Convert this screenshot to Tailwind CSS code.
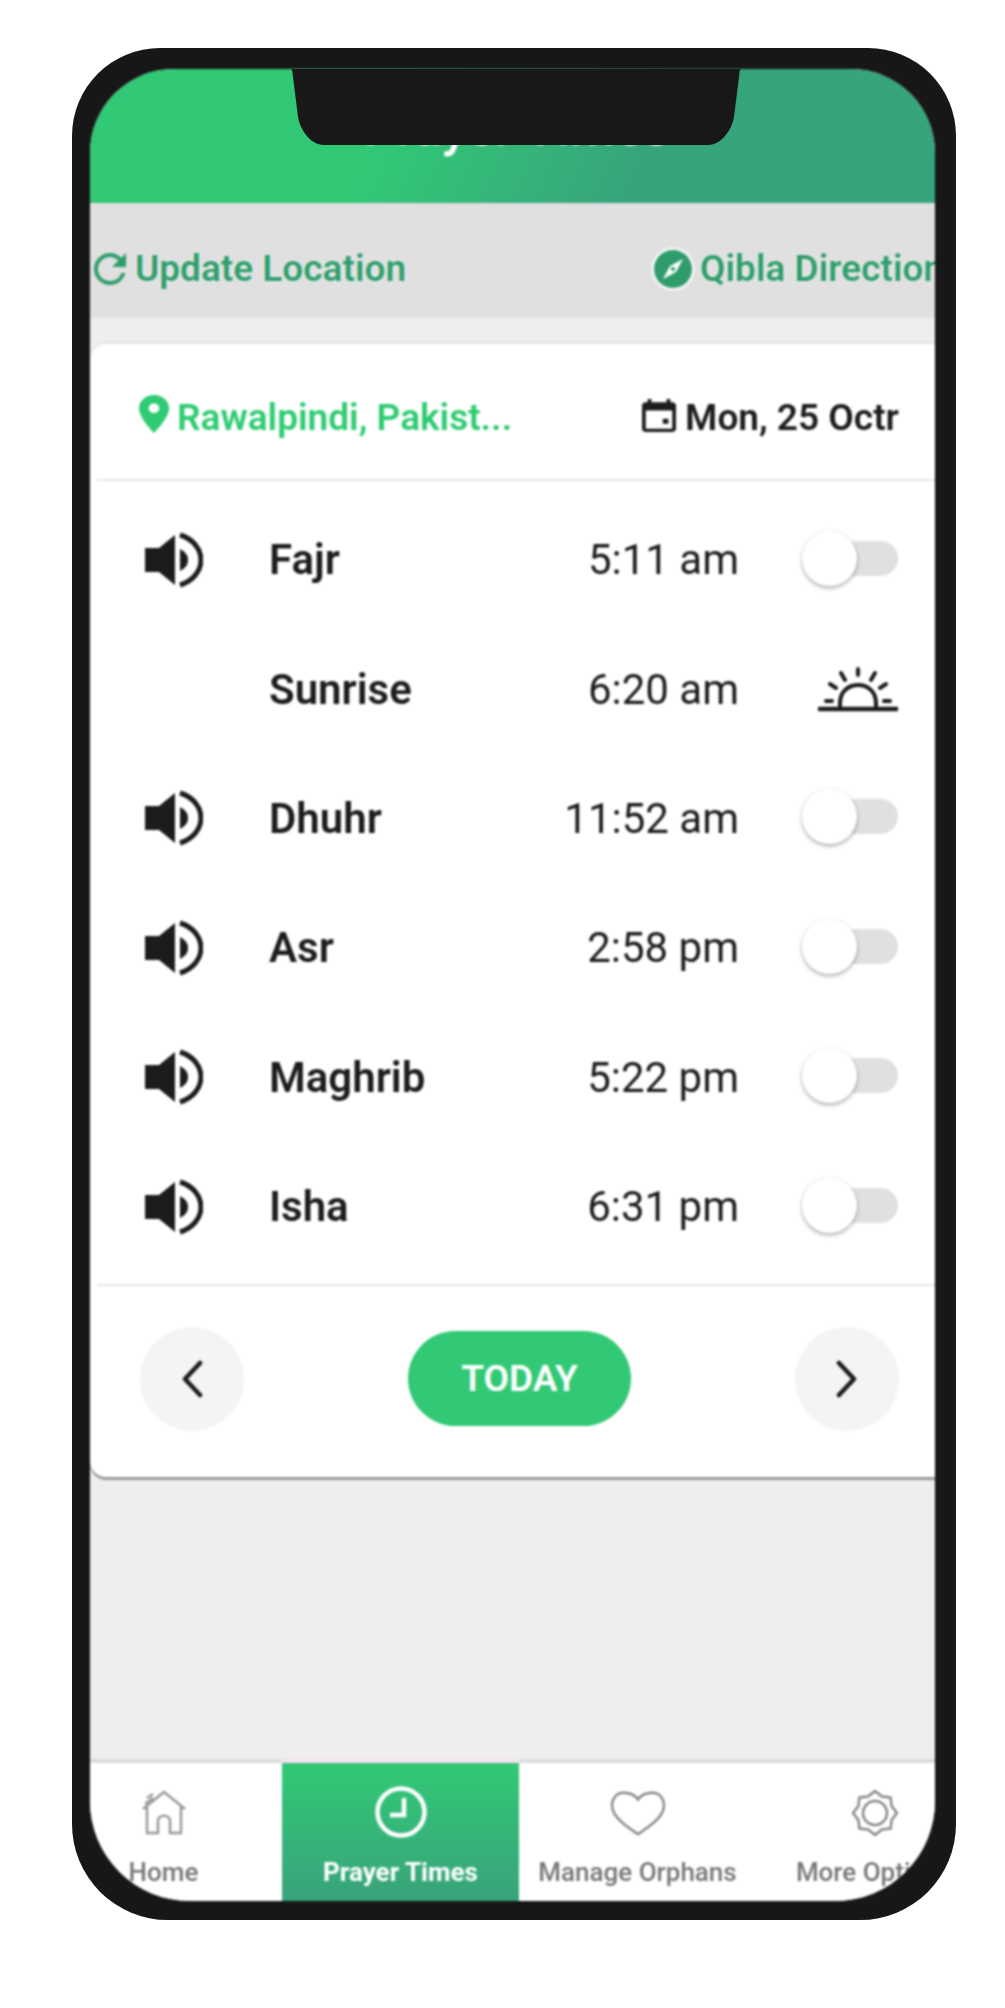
<!DOCTYPE html>
<html lang="en">
<head>
<meta charset="UTF-8">
<title>Prayer Times</title>
<script src="https://cdn.jsdelivr.net/npm/@tailwindcss/browser@4"></script>
</head>
<body class="bg-white font-['Roboto',sans-serif]">
<div class="w-[1005px] h-[2008px] pl-[72px] pt-[48px] overflow-hidden">
  <!-- phone body -->
  <div class="relative w-[884px] h-[1872px] bg-[#171717] rounded-t-[88px] rounded-b-[96px] pl-[18px] pr-[21px] pt-[21px] pb-[19px]">
    <!-- notch -->
    <svg class="absolute left-[218px] top-[21px] z-10" width="452" height="76" viewBox="0 0 452 76"><path d="M0 0H452C449 0 450 2 449 8L444 48C442 60 432 76 418 76H34C20 76 10 60 8 48L3 8C2 2 3 0 0 0Z" fill="#181818"/></svg>

    <div class="w-full h-full rounded-t-[84px] rounded-b-[100px] overflow-hidden bg-[#eeeeee] flex flex-col blur-[0.8px]">
      <!-- header -->
      <div class="h-[136px] shrink-0 border-b-2 border-[#e6dce2] bg-[linear-gradient(115deg,#32c976_35%,#37a57b_65%)]">
        <div class="text-center text-white text-[52px] font-medium leading-[54px] pt-[32px] pl-[8px]">Prayer Times</div>
      </div>

      <!-- location actions -->
      <div class="h-[113px] shrink-0 bg-[#e0e0e0] flex items-center pl-[4px] pt-[14px] text-[#2f9d6b] text-[37px] font-semibold whitespace-nowrap [text-shadow:0_0_3px_#fff]">
        <svg class="w-[32px] h-[32px] mr-[9px] shrink-0" viewBox="4 4 16 16" fill="#2f9d6b"><path d="M17.65 6.35A7.958 7.958 0 0 0 12 4c-4.42 0-7.99 3.58-7.99 8s3.57 8 7.99 8c3.73 0 6.84-2.55 7.73-6h-2.08A5.99 5.99 0 0 1 12 18c-3.31 0-6-2.69-6-6s2.69-6 6-6c1.66 0 3.14.69 4.22 1.78L13 11h7V4l-2.35 2.35z"/></svg>
        <span class="w-[516px] shrink-0">Update Location</span>
        <svg class="w-[44px] h-[44px] mr-[5px] shrink-0" viewBox="0 0 44 44"><circle cx="22" cy="22" r="21.5" fill="#fff" fill-opacity=".8"/><circle cx="22" cy="22" r="19" fill="#2f9d6b"/><path d="M32 12L25 25L19 19Z" fill="#fff"/><path d="M12 32L19 19L25 25Z" fill="#fff"/><circle cx="22" cy="22" r="2" fill="#2f9d6b"/></svg>
        <span class="shrink-0">Qibla Direction</span>
      </div>

      <!-- main -->
      <div class="flex-1 pt-[26px]">
        <div class="w-[880px] h-[1133px] bg-white rounded-l-[16px] shadow-[0_3px_1px_#9a9a9a,0_-2px_2px_#e4e4e4] flex flex-col">
          <!-- card head -->
          <div class="h-[137px] shrink-0 ml-[7px] border-b-2 border-[#e6e6e6] flex items-center pl-[42px] pt-[12px] text-[37px] font-semibold whitespace-nowrap">
            <svg class="w-[30px] h-[38px] mr-[8px] -mt-[8px] shrink-0" viewBox="5 2 14 20" preserveAspectRatio="none" fill="#2fcb72"><path d="M12 2C8.13 2 5 5.13 5 9c0 5.25 7 13 7 13s7-7.75 7-13c0-3.87-3.13-7-7-7zm0 9.5c-1.38 0-2.5-1.12-2.5-2.5s1.12-2.5 2.5-2.5 2.5 1.12 2.5 2.5-1.12 2.5-2.5 2.5z"/></svg>
            <span class="w-[465px] shrink-0 text-[#2fcb72]">Rawalpindi, Pakist...</span>
            <svg class="w-[34px] h-[33px] mr-[9px] -mt-[4px] shrink-0" viewBox="3 1 18 20" preserveAspectRatio="none" fill="#1c1c1c"><path d="M17 13h-3v3h3zM16 1v2H8V1H6v2H5c-1.11 0-1.99.9-1.99 2L3 19c0 1.1.89 2 2 2h14c1.1 0 2-.9 2-2V5c0-1.1-.9-2-2-2h-1V1h-2zm3 18H5V8h14v11z"/></svg>
            <span class="text-[#1c1c1c]">Mon, 25 Octr</span>
          </div>

          <!-- prayer rows -->
          <div class="pt-[14px] pl-[55px] pr-[72px] text-[#1c1c1c] text-[42px]">
            <div class="h-[129.4px] flex items-center">
              <svg class="w-[58px] h-[56px] mr-[66px] shrink-0" viewBox="0 0 58 56"><path d="M0 16H14L30 3V53L14 40H0Z" fill="#1c1c1c"/><path d="M35 17C41 20 43 24 43 28C43 32 41 36 35 39Z" fill="#1c1c1c"/><path d="M35 3C48 7 56 17 56 28C56 39 48 49 35 53" fill="none" stroke="#1c1c1c" stroke-width="5"/></svg>
              <span class="flex-1 font-semibold">Fajr</span>
              <span>5:11 am</span>
              <div class="relative w-[159px] h-[56px] shrink-0 -mt-[2px]">
                <div class="absolute right-0 top-[10px] w-[70px] h-[35px] rounded-full bg-[#e0e0e0]"></div>
                <div class="absolute left-[63px] top-0 w-[55px] h-[55px] rounded-full bg-white shadow-[0_2px_4px_#00000055]"></div>
              </div>
            </div>
            <div class="h-[129.4px] flex items-center">
              <div class="w-[58px] h-[56px] mr-[66px] shrink-0"></div>
              <span class="flex-1 font-semibold">Sunrise</span>
              <span>6:20 am</span>
              <div class="w-[159px] h-[56px] shrink-0 flex justify-end items-center">
                <svg class="w-[80px] h-[45px]" viewBox="0 0 80 45" fill="none" stroke="#1c1c1c" stroke-width="4" stroke-linecap="round"><path d="M1 42H79" stroke-width="4.5"/><path d="M22 41V36C22 25 30 18 40 18C50 18 58 25 58 36V41"/><path d="M40 2V8M23 6L27 13M57 6L53 13M12 17L18 21M68 17L62 21M8 34H14M66 34H72"/></svg>
              </div>
            </div>
            <div class="h-[129.4px] flex items-center">
              <svg class="w-[58px] h-[56px] mr-[66px] shrink-0" viewBox="0 0 58 56"><path d="M0 16H14L30 3V53L14 40H0Z" fill="#1c1c1c"/><path d="M35 17C41 20 43 24 43 28C43 32 41 36 35 39Z" fill="#1c1c1c"/><path d="M35 3C48 7 56 17 56 28C56 39 48 49 35 53" fill="none" stroke="#1c1c1c" stroke-width="5"/></svg>
              <span class="flex-1 font-semibold">Dhuhr</span>
              <span>11:52 am</span>
              <div class="relative w-[159px] h-[56px] shrink-0 -mt-[2px]">
                <div class="absolute right-0 top-[10px] w-[70px] h-[35px] rounded-full bg-[#e0e0e0]"></div>
                <div class="absolute left-[63px] top-0 w-[55px] h-[55px] rounded-full bg-white shadow-[0_2px_4px_#00000055]"></div>
              </div>
            </div>
            <div class="h-[129.4px] flex items-center">
              <svg class="w-[58px] h-[56px] mr-[66px] shrink-0" viewBox="0 0 58 56"><path d="M0 16H14L30 3V53L14 40H0Z" fill="#1c1c1c"/><path d="M35 17C41 20 43 24 43 28C43 32 41 36 35 39Z" fill="#1c1c1c"/><path d="M35 3C48 7 56 17 56 28C56 39 48 49 35 53" fill="none" stroke="#1c1c1c" stroke-width="5"/></svg>
              <span class="flex-1 font-semibold">Asr</span>
              <span>2:58 pm</span>
              <div class="relative w-[159px] h-[56px] shrink-0 -mt-[2px]">
                <div class="absolute right-0 top-[10px] w-[70px] h-[35px] rounded-full bg-[#e0e0e0]"></div>
                <div class="absolute left-[63px] top-0 w-[55px] h-[55px] rounded-full bg-white shadow-[0_2px_4px_#00000055]"></div>
              </div>
            </div>
            <div class="h-[129.4px] flex items-center">
              <svg class="w-[58px] h-[56px] mr-[66px] shrink-0" viewBox="0 0 58 56"><path d="M0 16H14L30 3V53L14 40H0Z" fill="#1c1c1c"/><path d="M35 17C41 20 43 24 43 28C43 32 41 36 35 39Z" fill="#1c1c1c"/><path d="M35 3C48 7 56 17 56 28C56 39 48 49 35 53" fill="none" stroke="#1c1c1c" stroke-width="5"/></svg>
              <span class="flex-1 font-semibold">Maghrib</span>
              <span>5:22 pm</span>
              <div class="relative w-[159px] h-[56px] shrink-0 -mt-[2px]">
                <div class="absolute right-0 top-[10px] w-[70px] h-[35px] rounded-full bg-[#e0e0e0]"></div>
                <div class="absolute left-[63px] top-0 w-[55px] h-[55px] rounded-full bg-white shadow-[0_2px_4px_#00000055]"></div>
              </div>
            </div>
            <div class="h-[129.4px] flex items-center">
              <svg class="w-[58px] h-[56px] mr-[66px] shrink-0" viewBox="0 0 58 56"><path d="M0 16H14L30 3V53L14 40H0Z" fill="#1c1c1c"/><path d="M35 17C41 20 43 24 43 28C43 32 41 36 35 39Z" fill="#1c1c1c"/><path d="M35 3C48 7 56 17 56 28C56 39 48 49 35 53" fill="none" stroke="#1c1c1c" stroke-width="5"/></svg>
              <span class="flex-1 font-semibold">Isha</span>
              <span>6:31 pm</span>
              <div class="relative w-[159px] h-[56px] shrink-0 -mt-[2px]">
                <div class="absolute right-0 top-[10px] w-[70px] h-[35px] rounded-full bg-[#e0e0e0]"></div>
                <div class="absolute left-[63px] top-0 w-[55px] h-[55px] rounded-full bg-white shadow-[0_2px_4px_#00000055]"></div>
              </div>
            </div>
          </div>

          <!-- day controls -->
          <div class="mt-[13px] ml-[7px] border-t-2 border-[#e6e6e6] flex-1 flex items-center pl-[43px] pb-[6px]">
            <div class="w-[104px] h-[104px] shrink-0 rounded-full bg-[#f4f4f4] flex items-center justify-center">
              <svg class="w-[24px] h-[38px]" viewBox="0 0 24 38" fill="none" stroke="#1c1c1c" stroke-width="4.5" stroke-linecap="round" stroke-linejoin="round"><path d="M20 3L5 19L20 35"/></svg>
            </div>
            <div class="ml-[164px] w-[223px] h-[95px] shrink-0 rounded-full bg-[#31c975] text-white text-[37px] font-semibold flex items-center justify-center">TODAY</div>
            <div class="ml-[164px] w-[104px] h-[104px] shrink-0 rounded-full bg-[#f4f4f4] flex items-center justify-center">
              <svg class="w-[24px] h-[38px]" viewBox="0 0 24 38" fill="none" stroke="#1c1c1c" stroke-width="4.5" stroke-linecap="round" stroke-linejoin="round"><path d="M4 3L19 19L4 35"/></svg>
            </div>
          </div>
        </div>
      </div>

      <!-- bottom nav -->
      <div class="h-[142px] shrink-0 bg-white border-t-4 border-[#dcdcdc] flex -ml-[45px] w-[1000px] text-[26px] leading-[30px] font-medium text-[#777777] whitespace-nowrap">
        <div class="w-[237px] shrink-0 flex flex-col items-center pt-[28px]">
          <svg class="w-[44px] h-[46px]" viewBox="0 0 44 46" fill="none" stroke="#999999" stroke-width="2.5" stroke-linejoin="round"><path d="M1 18L22 1L43 18"/><path d="M5 7L11 3M3 13L11 7"/><path d="M5 16V42H16V30C16 23 28 23 28 30V42H39V16"/></svg>
          <span class="mt-[20px]">Home</span>
        </div>
        <div class="w-[237px] shrink-0 -mt-[4px] border-t-4 border-[#f9e0f2] flex flex-col items-center pt-[23px] text-white font-bold bg-linear-to-b from-[#31c975] to-[#38a37b]">
          <svg class="w-[52px] h-[52px]" viewBox="0 0 52 52" fill="none" stroke="#ffffff" stroke-width="4.5"><circle cx="26" cy="26" r="23.5"/><path d="M29 12V29H15"/></svg>
          <span class="mt-[19px]">Prayer Times</span>
        </div>
        <div class="w-[237px] shrink-0 flex flex-col items-center pt-[28px]">
          <svg class="w-[54px] h-[45px]" viewBox="0 0 56 45" fill="none" stroke="#888888" stroke-width="2.5"><path d="M28 8C24 2 18 1 13 1C6 1 1 7 1 14C1 26 16 36 28 44C40 36 55 26 55 14C55 7 50 1 43 1C38 1 32 2 28 8Z"/></svg>
          <span class="mt-[21px]">Manage Orphans</span>
        </div>
        <div class="w-[237px] shrink-0 flex flex-col items-center pt-[27px]">
          <svg class="w-[46px] h-[46px]" viewBox="0 0 46 46" fill="none" stroke="#888888" stroke-width="2.5" stroke-linejoin="round"><path d="M23 1L29.9 6.4L38.6 7.4L39.6 16.1L45 23L39.6 29.9L38.6 38.6L29.9 39.6L23 45L16.1 39.6L7.4 38.6L6.4 29.9L1 23L6.4 16.1L7.4 7.4L16.1 6.4Z"/><circle cx="23" cy="23" r="12"/></svg>
          <span class="mt-[21px]">More Options</span>
        </div>
      </div>
    </div>
  </div>
</div>
</body>
</html>
